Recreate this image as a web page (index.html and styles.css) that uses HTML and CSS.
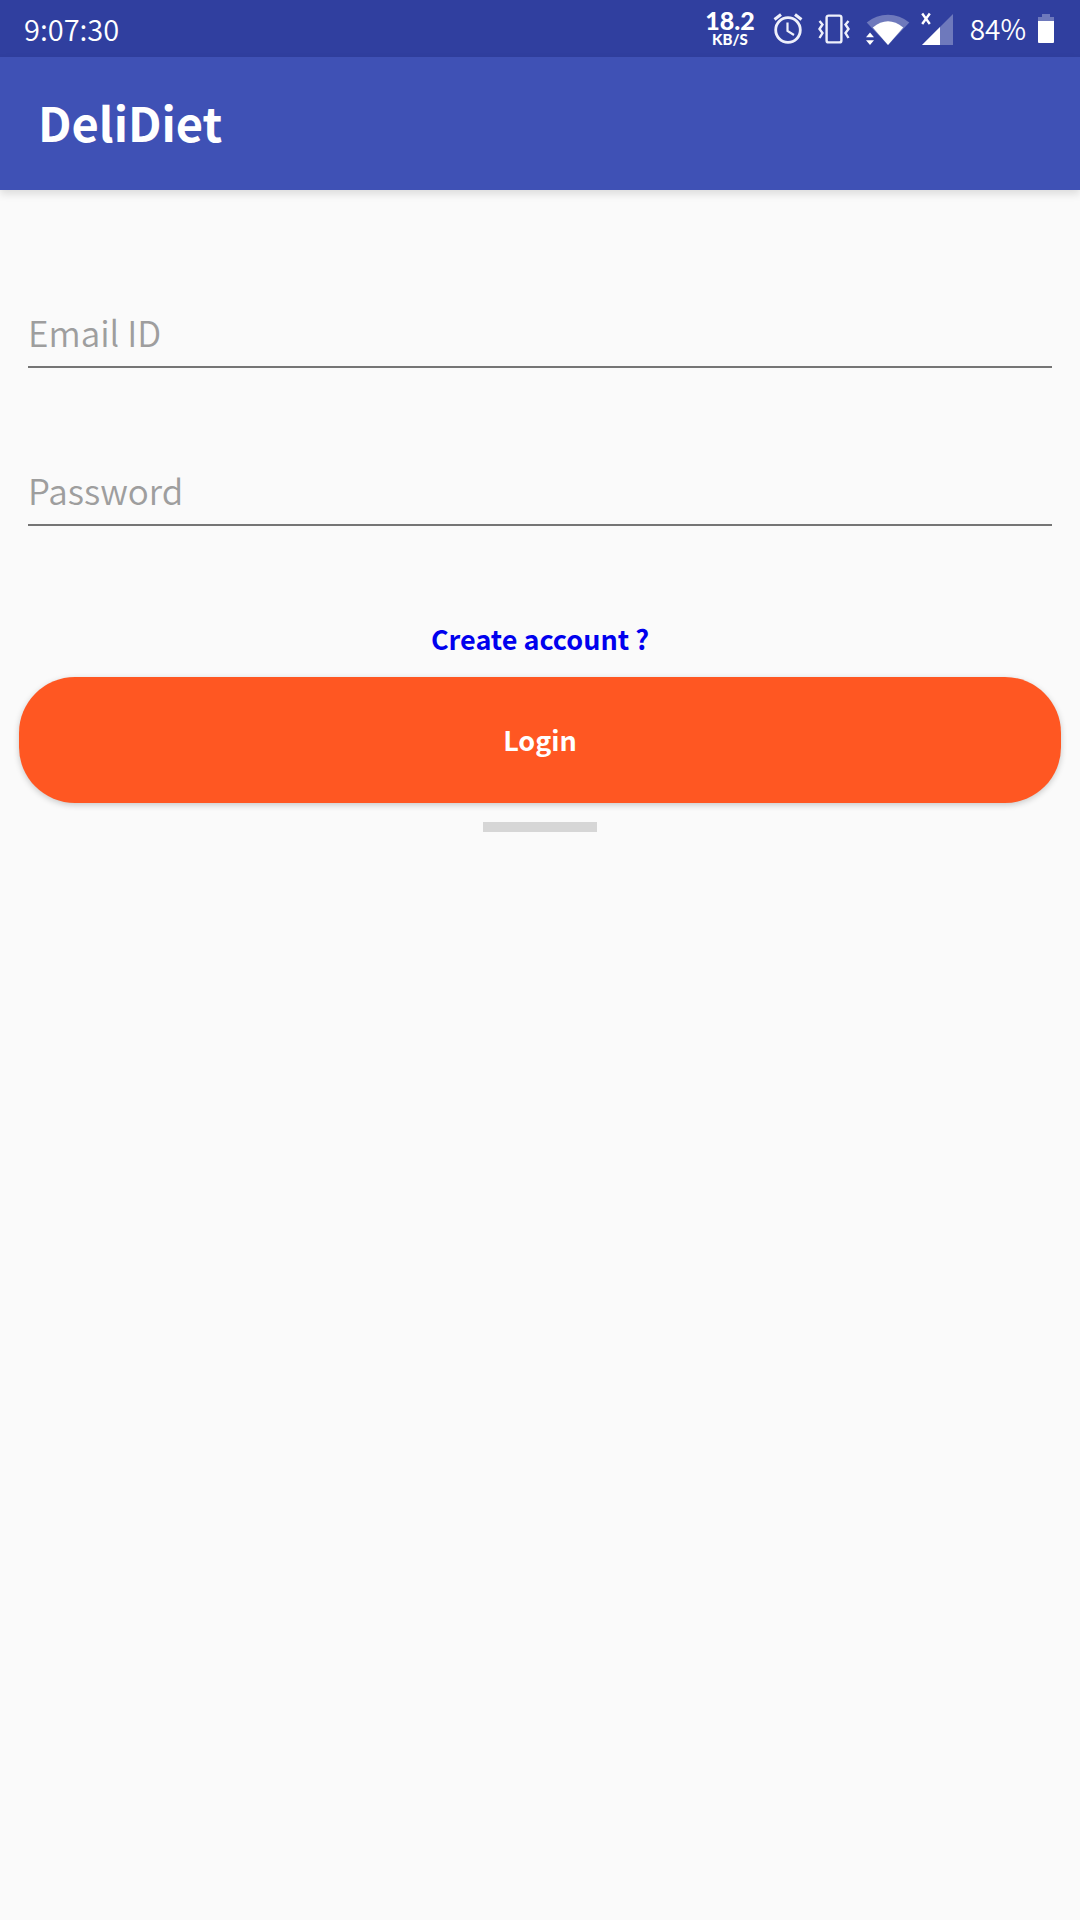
FILE: index.html
```html
<!DOCTYPE html>
<html lang="en">
<head>
<meta charset="utf-8">
<meta name="viewport" content="width=device-width, initial-scale=1">
<title>DeliDiet</title>
<link rel="stylesheet" href="styles.css">
</head>
<body>
<div class="status-bar">
  <time class="clock">9:07:30</time>
  <div class="status-icons">
    <div class="speed"><span class="speed-value">18.2</span><span class="speed-unit">KB/S</span></div>
    <svg class="alarm" width="30" height="32" viewBox="0 0 30 32" fill="none" stroke="#eef0fb" aria-hidden="true">
      <circle cx="15" cy="17" r="12.300" stroke-width="2.800"/>
      <path d="M14.500 9.500v8.500l6.500 4" stroke-width="2.200"/>
      <path d="M1.500 6.500L8 1.500M28.500 6.500L22 1.500" stroke-width="3"/>
    </svg>
    <svg class="vibrate" width="32" height="32" viewBox="0 0 32 32" fill="none" stroke="#eef0fb" stroke-width="2.4" aria-hidden="true">
      <rect x="8.600" y="2.600" width="14.800" height="26.800" rx="2"/>
      <path d="M1.500 8l3 3.500-3 4.500 3 4-3 5M30.500 8l-3 3.500 3 4.500-3 4 3 5"/>
    </svg>
    <svg class="wifi" width="44" height="32" viewBox="0 0 44 32" fill="#fff" aria-hidden="true">
      <path opacity=".3" d="M.7 9.500A33 33 0 0 1 43.300 9.500L22 32z"/>
      <path d="M6.800 14.500Q22 2 37.200 14.500L22 32z"/>
      <path d="M0 24.200l4-4.700 4 4.700zM0 27.200l4 4.800 4-4.800z"/>
    </svg>
    <svg class="signal" width="34" height="34" viewBox="0 0 34 34" fill="#fff" aria-hidden="true">
      <path opacity=".3" d="M33 2v31H2z"/>
      <path d="M20 15v18H2z"/>
      <path d="M2.200 1.500l7.600 10.500M9.800 1.500l-7.600 10.500" stroke="#fff" stroke-width="2.400"/>
    </svg>
    <span class="percent">84%</span>
    <svg class="battery" width="16" height="30" viewBox="0 0 16 30" fill="#fff" aria-hidden="true">
      <path opacity=".3" d="M4 0h8v3h4v4H0V3h4z"/>
      <path d="M0 7h16v21q0 1-1 1H1q-1 0-1-1z"/>
    </svg>
  </div>
</div>
<header class="app-bar"><h1 class="title">DeliDiet</h1></header>
<main>
  <form class="login-form">
    <input class="field" type="email" placeholder="Email ID" aria-label="Email ID">
    <input class="field" type="password" placeholder="Password" aria-label="Password">
    <a class="create" href="#">Create account ?</a>
    <button class="login" type="button">Login</button>
    <div class="handle"></div>
  </form>
</main>
</body>
</html>
```

FILE: styles.css
```css
* {
  box-sizing: border-box;
}

body {
  margin: 0;
  min-height: 100vh;
  background: #fafafa;
  font-family: "Noto Sans CJK SC", "Noto Sans", sans-serif;
}

.status-bar {
  display: flex;
  align-items: center;
  justify-content: space-between;
  height: 57px;
  padding: 0 26px 0 24px;
  background: #303f9f;
  color: #fff;
}

.clock,
.percent {
  padding-bottom: 2px;
  font-size: 28px;
  line-height: 40px;
  font-weight: 350;
}

.clock {
  font-size: 29px;
}

.status-icons {
  display: flex;
  align-items: center;
}

.speed {
  display: flex;
  flex-direction: column;
  align-items: center;
  margin-right: 18px;
  padding-bottom: 2px;
  font-family: Lato, sans-serif;
  font-weight: 900;
}

.speed-value {
  font-size: 25px;
  line-height: 22px;
}

.speed-unit {
  font-size: 15px;
  line-height: 16px;
}

.alarm {
  margin-right: 15px;
}

.vibrate {
  margin-right: 16px;
}

.wifi {
  margin-right: 10px;
}

.signal {
  margin-right: 16px;
}

.percent {
  margin-right: 12px;
}

.app-bar {
  display: flex;
  align-items: center;
  height: 133px;
  padding: 0 38px 4px;
  background: #3f51b5;
  box-shadow: 0 4px 8px rgba(0, 0, 0, 0.12);
  color: #fff;
}

.title {
  margin: 0;
  font-size: 47px;
  line-height: 64px;
  font-weight: 700;
}

.login-form {
  display: flex;
  flex-direction: column;
  padding: 108px 19px 0;
}

.field {
  height: 70px;
  margin: 0 9px 88px;
  padding: 0 0 2px;
  border: 0;
  border-bottom: 2px solid #757575;
  border-radius: 0;
  outline: 0;
  background: transparent;
  color: #212121;
  font-family: inherit;
  font-size: 35px;
  font-weight: 350;
}

.field::placeholder {
  color: #9e9e9e;
  opacity: 1;
}

.create {
  align-self: center;
  margin-top: 5px;
  color: #0000ee;
  font-size: 27px;
  line-height: 40px;
  font-weight: 700;
  text-decoration: none;
}

.login {
  height: 126px;
  margin-top: 18px;
  padding: 0 0 2px;
  border: 0;
  border-radius: 56px;
  background: #ff5722;
  box-shadow: 0 2px 6px rgba(0, 0, 0, 0.2);
  color: #fff;
  font-family: inherit;
  font-size: 27px;
  font-weight: 700;
}

.handle {
  align-self: center;
  width: 114px;
  height: 10px;
  margin-top: 19px;
  background: #d6d6d6;
}
```
